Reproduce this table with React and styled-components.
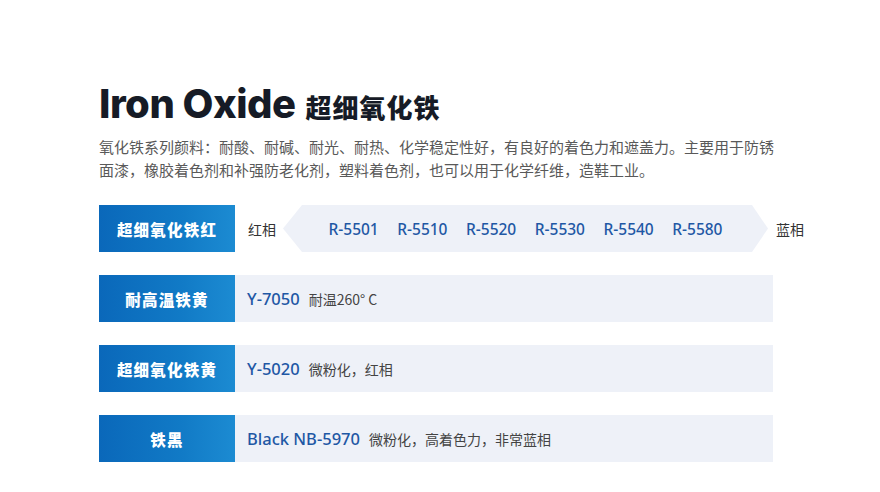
import React from 'react';
import styled, { createGlobalStyle } from 'styled-components';

const GlobalStyle = createGlobalStyle`
  html, body {
    margin: 0;
    padding: 0;
    background: #fff;
  }
  body {
    font-family: "Noto Sans", "Noto Sans CJK SC", sans-serif;
  }
`;

const Page = styled.div`
  width: 880px;
  height: 492px;
  box-sizing: border-box;
  padding: 80px 0 0 99px;
  overflow: hidden;
`;

const TitleRow = styled.h1`
  display: flex;
  align-items: baseline;
  gap: 10px;
  margin: 0;
  color: #161b26;
  line-height: 48px;
`;

const TitleEn = styled.span`
  font-family: Inter, "Noto Sans", sans-serif;
  font-weight: 800;
  font-size: 40px;
  letter-spacing: -0.5px;
`;

const TitleCn = styled.span`
  font-family: "Noto Sans CJK SC", sans-serif;
  font-weight: 900;
  font-size: 26px;
  letter-spacing: 1px;
`;

const Intro = styled.p`
  margin: 4px 0 0;
  width: 680px;
  font-family: "Noto Sans CJK SC", sans-serif;
  font-size: 15px;
  line-height: 23px;
  color: #595959;
`;

const Table = styled.div`
  display: flex;
  flex-direction: column;
  gap: 23px;
  margin-top: 24px;
`;

const Row = styled.div`
  display: flex;
  align-items: center;
  height: 47px;
`;

const Label = styled.div`
  flex: none;
  width: 136px;
  height: 100%;
  display: flex;
  align-items: center;
  justify-content: center;
  background: linear-gradient(90deg, #0a68ba 0%, #117ac6 60%, #1c8bd2 100%);
  color: #fff;
  font-family: "Noto Sans CJK SC", sans-serif;
  font-weight: 900;
  font-size: 15.5px;
  letter-spacing: 1.2px;
`;

const Bar = styled.div`
  width: 538px;
  height: 100%;
  display: flex;
  align-items: center;
  gap: 9px;
  padding-left: 12px;
  box-sizing: border-box;
  background: #eef1f8;
`;

const Tone = styled.span`
  font-family: "Noto Sans CJK SC", sans-serif;
  font-size: 14px;
  color: #333;
  margin: ${p => p.$end ? '0 0 0 8px' : '0 7px 0 13px'};
`;

const Arrow = styled.div`
  width: 485px;
  height: 100%;
  display: flex;
  align-items: center;
  justify-content: center;
  gap: 18.5px;
  background: #eef1f8;
  clip-path: polygon(19px 0, calc(100% - 16px) 0, 100% 50%, calc(100% - 16px) 100%, 19px 100%, 0 50%);
`;

const Code = styled.span`
  font-family: "Noto Sans", sans-serif;
  font-size: ${p => p.$bold ? '16.5px' : '15.5px'};
  color: #1f58a5;
  font-weight: 500;
`;

const Note = styled.span`
  font-family: "Noto Sans CJK SC", sans-serif;
  font-size: 14px;
  color: #444;
`;

const codes = ['R-5501', 'R-5510', 'R-5520', 'R-5530', 'R-5540', 'R-5580'];

const rows = [
  { label: '耐高温铁黄', code: 'Y-7050', note: '耐温260° C' },
  { label: '超细氧化铁黄', code: 'Y-5020', note: '微粉化，红相' },
  { label: '铁黑', code: 'Black NB-5970', note: '微粉化，高着色力，非常蓝相' },
];

export default function App() {
  return (
    <Page>
      <GlobalStyle />
      <TitleRow>
        <TitleEn>Iron Oxide</TitleEn>
        <TitleCn>超细氧化铁</TitleCn>
      </TitleRow>
      <Intro>
        氧化铁系列颜料：耐酸、耐碱、耐光、耐热、化学稳定性好，有良好的着色力和遮盖力。主要用于防锈面漆，橡胶着色剂和补强防老化剂，塑料着色剂，也可以用于化学纤维，造鞋工业。
      </Intro>
      <Table>
        <Row>
          <Label>超细氧化铁红</Label>
          <Tone>红相</Tone>
          <Arrow>
            {codes.map(c => <Code key={c}>{c}</Code>)}
          </Arrow>
          <Tone $end>蓝相</Tone>
        </Row>
        {rows.map(r => (
          <Row key={r.label}>
            <Label>{r.label}</Label>
            <Bar>
              <Code $bold>{r.code}</Code>
              <Note>{r.note}</Note>
            </Bar>
          </Row>
        ))}
      </Table>
    </Page>
  );
}
